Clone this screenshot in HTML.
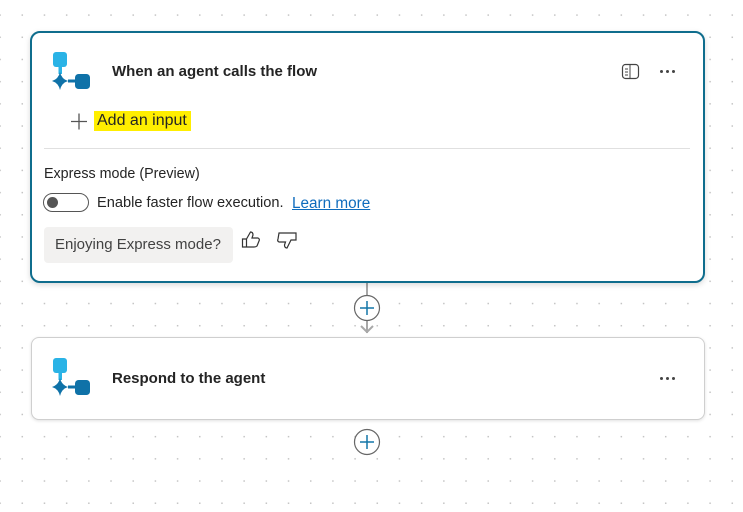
<!DOCTYPE html>
<html><head><style>
body{margin:0;width:743px;height:512px;overflow:hidden;background:#fff;font-family:"Liberation Sans",sans-serif;position:relative;
background-image:radial-gradient(circle,#c4c4c4 0.7px,transparent 1px);background-size:22.2px 22.2px;background-position:-11px 4px;}
.card{position:absolute;background:#fff;box-sizing:border-box;}
.abs{position:absolute}
.dots{position:absolute;width:20px;height:4px}
.dots i{position:absolute;top:0;width:3px;height:3px;border-radius:50%;background:#444}
</style></head><body>
<svg class="abs" style="left:0;top:0" width="743" height="512">
<line x1="367" y1="283" x2="367" y2="333" stroke="#a8a8a8" stroke-width="2"/>
<path d="M361 326 L367 332 L373 326" fill="none" stroke="#a8a8a8" stroke-width="2"/>
<circle cx="367" cy="308" r="12.5" fill="#fff" stroke="#666" stroke-width="1.2"/>
<path d="M360 308h14M367 301v14" stroke="#1477a8" stroke-width="1.5"/>
<circle cx="367" cy="442" r="12.5" fill="#fff" stroke="#666" stroke-width="1.2"/>
<path d="M360 442h14M367 435v14" stroke="#1477a8" stroke-width="1.5"/>
</svg>
<div class="card" style="left:30px;top:31px;width:675px;height:252px;border:2px solid #0f6d8d;border-radius:10px;box-shadow:0 2px 6px rgba(0,0,0,.15)"></div>
<div class="card" style="left:31px;top:337px;width:674px;height:83px;border:1px solid #cfcfcf;border-radius:8px;box-shadow:0 1px 3px rgba(0,0,0,.12)"></div>
<svg class="abs" style="left:51px;top:52px" width="40" height="40" viewBox="0 0 40 40">
<rect x="2" y="0" width="14" height="15" rx="3" fill="#2ab3e6"/>
<rect x="7.5" y="14" width="3.5" height="8" fill="#2ab3e6"/>
<path d="M9 20 Q10.5 27 17 29 Q10.5 31 9 38 Q7.5 31 1 29 Q7.5 27 9 20Z" fill="#0f72a8"/>
<rect x="17" y="27.5" width="7" height="3" fill="#0f72a8"/>
<rect x="24" y="22" width="15" height="15" rx="3.5" fill="#0f72a8"/>
</svg>
<svg class="abs" style="left:51px;top:358px" width="40" height="40" viewBox="0 0 40 40">
<rect x="2" y="0" width="14" height="15" rx="3" fill="#2ab3e6"/>
<rect x="7.5" y="14" width="3.5" height="8" fill="#2ab3e6"/>
<path d="M9 20 Q10.5 27 17 29 Q10.5 31 9 38 Q7.5 31 1 29 Q7.5 27 9 20Z" fill="#0f72a8"/>
<rect x="17" y="27.5" width="7" height="3" fill="#0f72a8"/>
<rect x="24" y="22" width="15" height="15" rx="3.5" fill="#0f72a8"/>
</svg>
<div class="abs" style="left:112px;top:63px;font-size:15px;font-weight:bold;color:#242424">When an agent calls the flow</div>
<div class="abs" style="left:112px;top:370px;font-size:15px;font-weight:bold;color:#242424">Respond to the agent</div>
<svg class="abs" style="left:621px;top:63px" width="20" height="18"><rect x="1.5" y="1.5" width="16" height="14" rx="3" fill="none" stroke="#444" stroke-width="1.2"/><path d="M9 2v13M4 6h3M4 9h3M4 12h3" stroke="#444" stroke-width="1"/></svg>
<div class="dots" style="left:660px;top:70px"><i style="left:0"></i><i style="left:6px"></i><i style="left:12px"></i></div>
<div class="dots" style="left:660px;top:377px"><i style="left:0"></i><i style="left:6px"></i><i style="left:12px"></i></div>
<svg class="abs" style="left:70px;top:113px" width="18" height="18"><path d="M1 8.5h16M9 0.5v16" stroke="#555" stroke-width="1.3"/></svg>
<div class="abs" style="left:94px;top:111px;height:20px;width:97px;background:#ffee00"></div>
<div class="abs" style="left:97px;top:112px;font-size:16px;color:#242424">Add an input</div>
<div class="abs" style="left:44px;top:148px;width:646px;height:1px;background:#e0e0e0"></div>
<div class="abs" style="left:44px;top:166px;font-size:14.3px;color:#242424">Express mode (Preview)</div>
<div class="abs" style="left:43px;top:193px;width:46px;height:19px;border:1.3px solid #555;border-radius:10px;box-sizing:border-box"></div>
<div class="abs" style="left:47px;top:197px;width:11px;height:11px;border-radius:50%;background:#555"></div>
<div class="abs" style="left:97px;top:195px;font-size:14.6px;color:#242424">Enable faster flow execution.</div>
<div class="abs" style="left:292px;top:195px;font-size:15.3px;color:#0f6cbd;text-decoration:underline">Learn more</div>
<div class="abs" style="left:44px;top:227px;width:189px;height:36px;background:#f2f1f0;border-radius:4px"></div>
<div class="abs" style="left:55px;top:236px;font-size:15px;color:#424242">Enjoying Express mode?</div>
<svg class="abs" style="left:241px;top:230px" width="24" height="20"><path d="M1.5 9h4v8h-4zM5.5 9l4-7q2.5 0 2.5 3l-1 3h6q2 1 1 3l-2 5q-1 1-3 1H5.5" fill="none" stroke="#333" stroke-width="1.2"/></svg>
<svg class="abs" style="left:276px;top:231px" width="24" height="22"><path d="M3 2h17v7h-5l-4 8q-2.5 0-2.5-3l1-3H3q-2-1-1-3z" fill="none" stroke="#333" stroke-width="1.2"/></svg>
</body></html>
